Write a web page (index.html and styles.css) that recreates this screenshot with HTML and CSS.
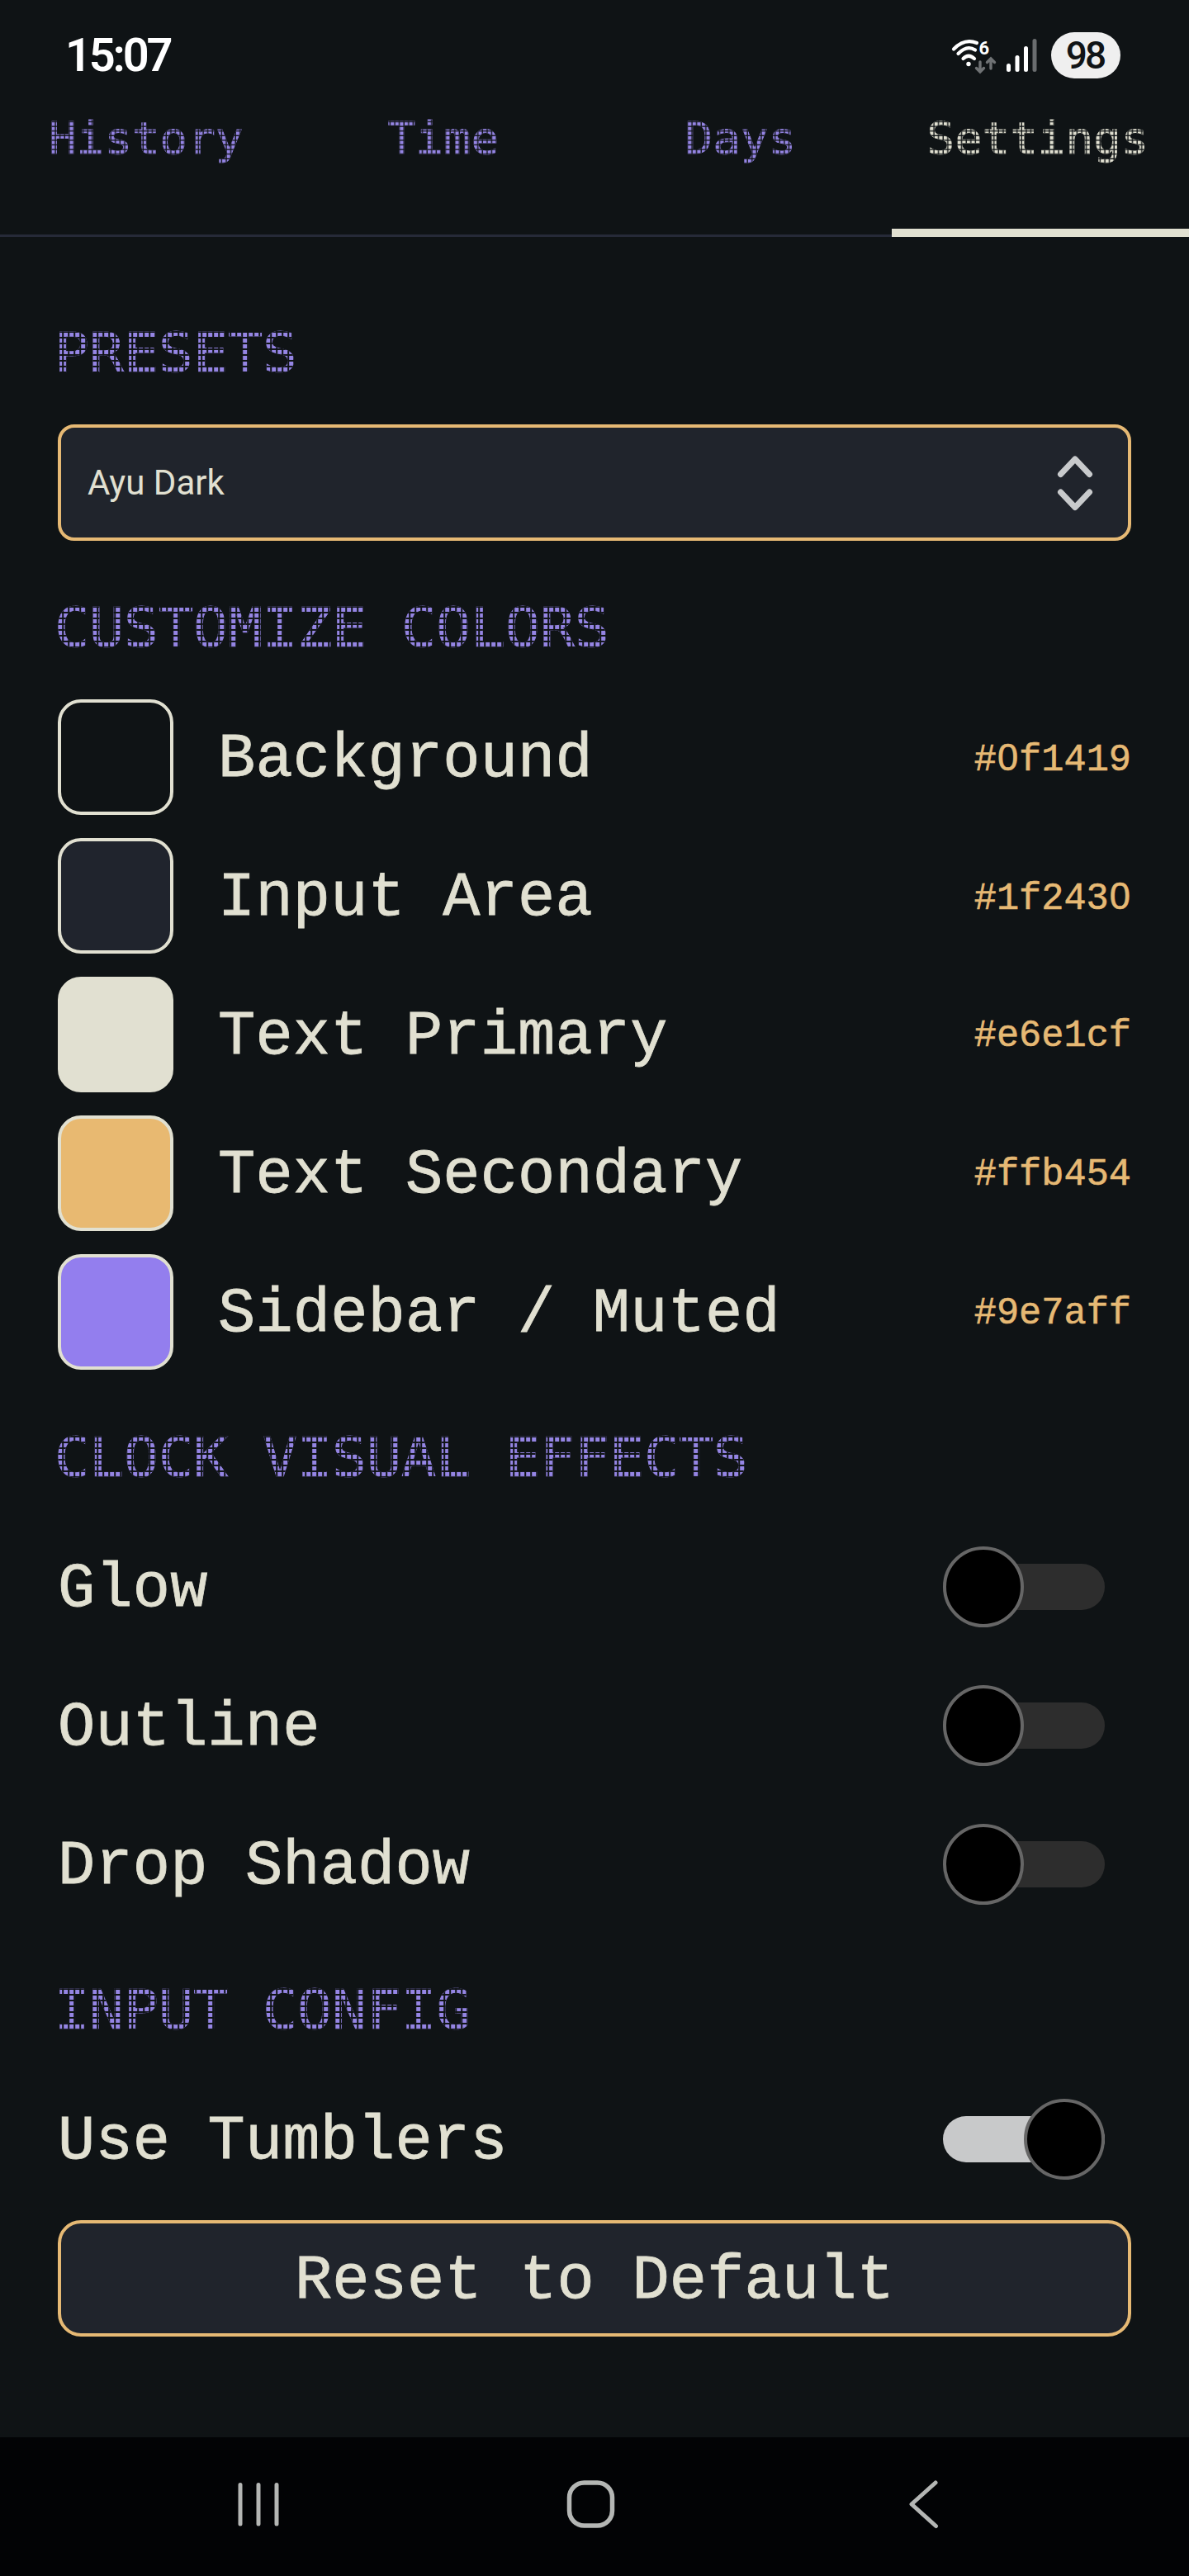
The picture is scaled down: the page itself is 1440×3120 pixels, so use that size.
FILE: index.html
```
<!DOCTYPE html>
<html lang="en">
<head>
    <meta charset="UTF-8">
    <meta name="viewport" content="width=device-width, initial-scale=1.0">
    <title>Settings</title>
    <link rel="stylesheet" href="styles.css">
</head>
<body>
    <header class="status-bar">
        <span class="clock">15:07</span>
        <div class="status-icons">
            <svg class="wifi" width="56" height="44" viewBox="0 0 56 44" fill="none" stroke="#fff" stroke-width="4.2" stroke-linecap="round">
                <path d="M4 14.500 Q17 1 32 7"/>
                <path d="M9.500 20 Q20 9 30 15.500"/>
                <path d="M15.500 26 Q22 19.500 29 26"/>
                <circle cx="22" cy="32.500" r="2.700" fill="#fff" stroke="none"/>
                <path d="M36 30 V42 M31.500 37.500 L36 42 L40.500 37.500" stroke="#6f7274" stroke-width="3.400"/>
                <path d="M49 38 V26 M44.500 30.500 L49 26 L53.500 30.500" stroke="#6f7274" stroke-width="3.400"/>
                <text x="34.500" y="20.500" font-family="Roboto" font-weight="700" font-size="22" fill="#fff" stroke="none">6</text>
            </svg>
            <svg class="signal" width="38" height="42" viewBox="0 0 38 42">
                <rect x="0" y="31" width="5" height="10" rx="2.5" fill="#fff"/>
                <rect x="10.5" y="21" width="5" height="20" rx="2.5" fill="#fff"/>
                <rect x="21" y="10" width="5" height="31" rx="2.5" fill="#fff"/>
                <rect x="31.5" y="1" width="5" height="40" rx="2.5" fill="#6a6d6f"/>
            </svg>
            <span class="battery">98</span>
        </div>
    </header>

    <nav class="tabs">
        <a class="tab"><span class="dots">History</span></a>
        <a class="tab"><span class="dots">Time</span></a>
        <a class="tab"><span class="dots">Days</span></a>
        <a class="tab active"><span class="dots">Settings</span></a>
    </nav>

    <main class="settings">
        <h2><span class="dots">PRESETS</span></h2>
        <div class="select">
            <span>Ayu Dark</span>
            <svg width="44" height="70" viewBox="0 0 44 70" fill="none" stroke="#c8cacc" stroke-width="7" stroke-linecap="round" stroke-linejoin="round">
                <path d="M4.5 24.5 L22 6 L39.5 24.5"/>
                <path d="M4.5 46 L22 64.5 L39.5 46"/>
            </svg>
        </div>

        <h2><span class="dots">CUSTOMIZE COLORS</span></h2>
        <div class="row">
            <span class="swatch background"></span>
            <span class="label">Background</span>
            <span class="hex">#<i>0</i>f1419</span>
        </div>
        <div class="row">
            <span class="swatch input-area"></span>
            <span class="label">Input Area</span>
            <span class="hex">#1f243<i>0</i></span>
        </div>
        <div class="row">
            <span class="swatch primary"></span>
            <span class="label">Text Primary</span>
            <span class="hex">#e6e1cf</span>
        </div>
        <div class="row">
            <span class="swatch secondary"></span>
            <span class="label">Text Secondary</span>
            <span class="hex">#ffb454</span>
        </div>
        <div class="row">
            <span class="swatch muted"></span>
            <span class="label">Sidebar / Muted</span>
            <span class="hex">#9e7aff</span>
        </div>

        <h2><span class="dots">CLOCK VISUAL EFFECTS</span></h2>
        <div class="row">
            <span class="label">Glow</span>
            <span class="toggle"></span>
        </div>
        <div class="row">
            <span class="label">Outline</span>
            <span class="toggle"></span>
        </div>
        <div class="row">
            <span class="label">Drop Shadow</span>
            <span class="toggle"></span>
        </div>

        <h2><span class="dots">INPUT CONFIG</span></h2>
        <div class="row">
            <span class="label">Use Tumblers</span>
            <span class="toggle on"></span>
        </div>
        <button class="reset">Reset to Default</button>
    </main>

    <footer class="nav-bar">
        <svg width="60" height="60" viewBox="0 0 60 60" stroke="#b4b6b4" stroke-width="5" stroke-linecap="round">
            <path d="M8 6.5 V54 M30 6.5 V54 M52 6.5 V54"/>
        </svg>
        <svg width="60" height="60" viewBox="0 0 60 60" fill="none" stroke="#b4b6b4" stroke-width="5.5">
            <rect x="3.5" y="4" width="52" height="52" rx="18"/>
        </svg>
        <svg width="60" height="60" viewBox="0 0 60 60" fill="none" stroke="#b4b6b4" stroke-width="5" stroke-linecap="round" stroke-linejoin="round">
            <path d="M44 4 L15 30 L44.5 56.5"/>
        </svg>
    </footer>
</body>
</html>
```
FILE: styles.css
```
:root {
    --bg: #0f1315;
    --input: #20242c;
    --text: #e1e0d1;
    --accent: #e6b974;
    --muted: #9585e4;
}

*,
*::after {
    box-sizing: border-box;
}

body {
    margin: 0;
    width: 1440px;
    height: 3120px;
    display: flex;
    flex-direction: column;
    background-color: var(--bg);
    color: var(--text);
    font-family: "Liberation Mono", monospace;
}

.status-bar {
    height: 130px;
    padding: 4px 83px 0 79px;
    display: flex;
    justify-content: space-between;
    align-items: center;
    color: #fff;
    font-family: Roboto, sans-serif;
}

.clock {
    font-size: 56px;
    font-weight: 600;
    letter-spacing: -3.2px;
}

.status-icons {
    display: flex;
    align-items: center;
}

.wifi {
    margin-right: 12px;
    overflow: visible;
}

.signal {
    margin-right: 16px;
}

.battery {
    width: 84px;
    height: 56px;
    padding-right: 2px;
    border-radius: 28px;
    background-color: #efefef;
    color: #111416;
    font-size: 46px;
    font-weight: 500;
    letter-spacing: -3px;
    line-height: 57px;
    text-align: center;
}

/* dot matrix lettering: grid lines over the fill, clipped to the text */
.dots {
    --ink: var(--muted);
    display: inline-block;
    font-family: "DejaVu Sans Mono", monospace;
    line-height: 1.2;
    letter-spacing: -0.002em;
    color: transparent;
    background:
        linear-gradient(90deg, transparent 74%, var(--bg) 76%) 0.06em 0 / 0.1em 100%,
        linear-gradient(180deg, transparent 74%, var(--bg) 76%) 0 0.016em / 100% 0.1064em,
        var(--ink);
    -webkit-background-clip: text;
    background-clip: text;
    -webkit-text-stroke: 0.015em transparent;
    transform: translateX(-0.057em) scaleY(0.94);
    transform-origin: 0 0.943em;
}

.tabs {
    height: 157px;
    display: grid;
    grid-template-columns: repeat(4, 1fr);
    border-bottom: 3px solid #262a38;
}

.tab {
    height: 157px;
    padding-top: 3px;
    text-align: center;
    font-size: 56px;
    line-height: 1.2;
}

.tab.active {
    border-bottom: 10px solid var(--text);
}

.tab.active .dots {
    --ink: var(--text);
}

.settings {
    flex: 1;
    padding: 62px 70px 0;
    display: flex;
    flex-direction: column;
    gap: 28px;
}

h2 {
    margin: 0;
    height: 137px;
    padding-top: 35px;
    font-size: 70px;
    font-weight: normal;
    line-height: 1.2;
    white-space: pre;
}

.select {
    height: 141px;
    margin-bottom: -1px;
    padding: 0 42px 0 32px;
    display: flex;
    justify-content: space-between;
    align-items: center;
    border: 4px solid var(--accent);
    border-radius: 20px;
    background-color: var(--input);
    font-family: Roboto, sans-serif;
    font-size: 42px;
}

.row {
    height: 140px;
    display: flex;
    align-items: center;
}

.swatch {
    width: 140px;
    height: 140px;
    margin-right: 54px;
    border: 4px solid var(--text);
    border-radius: 28px;
}

.background {
    background-color: var(--bg);
}

.input-area {
    background-color: #20242d;
}

.primary {
    background-color: var(--text);
}

.secondary {
    background-color: #e8b971;
}

.muted {
    background-color: #937eee;
}

.label,
.reset {
    font-size: 75.3px;
    letter-spacing: 0.2px;
    -webkit-text-stroke: 0.8px currentColor;
}

.label {
    flex: 1;
    padding-top: 6px;
}

.hex {
    padding-top: 4px;
    color: var(--accent);
    font-size: 45.3px;
    -webkit-text-stroke: 0.6px currentColor;
}

/* plain zero without the inner dot */
.hex i {
    display: inline-block;
    width: 27.2px;
    font-family: "Liberation Sans", sans-serif;
    font-style: normal;
    text-align: center;
}

.toggle {
    position: relative;
    width: 196px;
    height: 56px;
    margin-right: 32px;
    border-radius: 28px;
    background-color: #2d2d2d;
}

.toggle::after {
    content: "";
    position: absolute;
    top: -21px;
    left: 0;
    width: 98px;
    height: 98px;
    border: 4px solid #666;
    border-radius: 50%;
    background-color: #000;
}

.toggle.on {
    background-color: #c8c9ca;
}

.toggle.on::after {
    left: 98px;
}

.reset {
    height: 141px;
    padding: 6px 0 0;
    border: 4px solid var(--accent);
    border-radius: 28px;
    background-color: var(--input);
    color: var(--text);
    font-family: inherit;
}

.nav-bar {
    height: 168px;
    padding: 0 120px 6px 111px;
    display: grid;
    grid-template-columns: repeat(3, 1fr);
    place-items: center;
    background-color: #020305;
}
```
